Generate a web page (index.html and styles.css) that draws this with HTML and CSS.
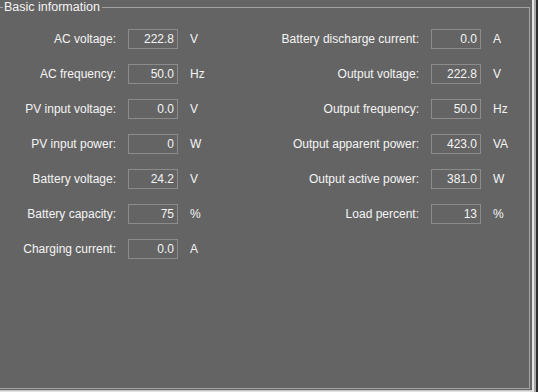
FILE: index.html
```html
<!DOCTYPE html>
<html>
<head>
    <meta charset="utf-8">
    <link rel="stylesheet" href="styles.css">
</head>
<body>
<div class="window">
    <div class="main">
        <fieldset class="group">
            <legend>Basic information</legend>
            <div class="cols">
                <div class="col left">
                    <div class="row"><span class="label">AC voltage:</span><span class="box">222.8</span><span class="unit">V</span></div>
                    <div class="row"><span class="label">AC frequency:</span><span class="box">50.0</span><span class="unit">Hz</span></div>
                    <div class="row"><span class="label">PV input voltage:</span><span class="box">0.0</span><span class="unit">V</span></div>
                    <div class="row"><span class="label">PV input power:</span><span class="box">0</span><span class="unit">W</span></div>
                    <div class="row"><span class="label">Battery voltage:</span><span class="box">24.2</span><span class="unit">V</span></div>
                    <div class="row"><span class="label">Battery capacity:</span><span class="box">75</span><span class="unit">%</span></div>
                    <div class="row"><span class="label">Charging current:</span><span class="box">0.0</span><span class="unit">A</span></div>
                </div>
                <div class="col right">
                    <div class="row"><span class="label">Battery discharge current:</span><span class="box">0.0</span><span class="unit">A</span></div>
                    <div class="row"><span class="label">Output voltage:</span><span class="box">222.8</span><span class="unit">V</span></div>
                    <div class="row"><span class="label">Output frequency:</span><span class="box">50.0</span><span class="unit">Hz</span></div>
                    <div class="row"><span class="label">Output apparent power:</span><span class="box">423.0</span><span class="unit">VA</span></div>
                    <div class="row"><span class="label">Output active power:</span><span class="box">381.0</span><span class="unit">W</span></div>
                    <div class="row"><span class="label">Load percent:</span><span class="box">13</span><span class="unit">%</span></div>
                </div>
            </div>
        </fieldset>
        <div class="edge-right"></div>
    </div>
    <div class="edge-bottom"></div>
</div>
</body>
</html>
```

FILE: styles.css
```css
html, body {
    margin: 0;
    padding: 0;
    background-color: #646464;
}

body {
    font-family: "Liberation Sans", Arial, sans-serif;
    font-size: 12px;
    color: #f4f4f4;
    overflow: hidden;
}

.window {
    width: 538px;
    height: 392px;
    display: flex;
    flex-direction: column;
}

.main {
    display: flex;
    height: 390px;
}

/* group box, left edge sits just off the window */
.group {
    margin: 0 0 0 -2px;
    padding: 15px 0 0 0;
    width: 532px;
    height: 389px;
    box-sizing: border-box;
    border: 1px solid #a2a2a2;
    min-width: 0;
    flex-shrink: 0;
}

.group legend {
    margin-left: 4px;
    padding: 0 2px 0 1px;
    line-height: 14px;
    font-size: 12.5px;
    color: #f4f4f4;
}

.cols {
    display: flex;
}

.col {
    display: flex;
    flex-direction: column;
    gap: 15px;
}

.col.left {
    width: 231px;
}

.row {
    display: flex;
    align-items: center;
    height: 20px;
}

.label {
    text-align: right;
    white-space: nowrap;
}

.left .label {
    width: 117px;
}

.right .label {
    width: 189px;
}

.box {
    margin-left: 12px;
    width: 50px;
    height: 20px;
    box-sizing: border-box;
    border: 1px solid #8c8c8c;
    padding-right: 3px;
    text-align: right;
    line-height: 18px;
}

.unit {
    margin-left: 12px;
}

/* window frame strips */
.edge-right {
    width: 8px;
    height: 392px;
    flex-shrink: 0;
    box-sizing: border-box;
    border-left: 2px solid #646464;
    background: linear-gradient(to right, #e4e4e4 0, #e4e4e4 2px, #a8a8a8 2px, #a8a8a8 4px, #2e2e2e 4px);
}

.edge-bottom {
    height: 2px;
    width: 532px;
    background: linear-gradient(to bottom, #c8c8c8 0, #c8c8c8 1px, #e0e0e0 1px);
}
```
